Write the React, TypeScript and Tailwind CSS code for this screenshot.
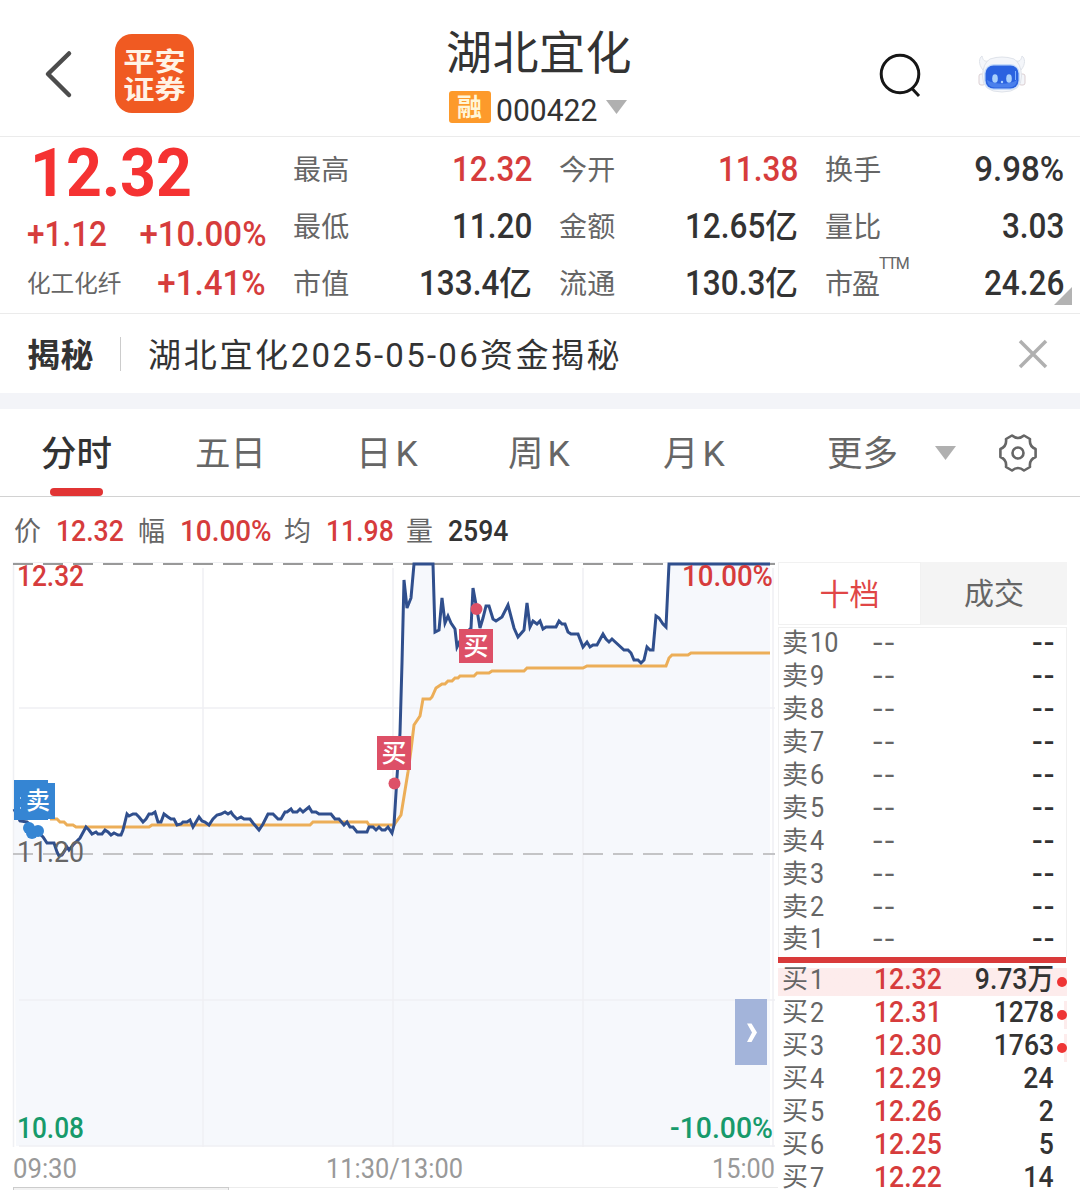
import React from "react";
import clsx from "clsx";

const STATS = [
  [
    { label: "最高", value: "12.32", up: true },
    { label: "最低", value: "11.20" },
    { label: "市值", value: "133.4", unit: "亿" },
  ],
  [
    { label: "今开", value: "11.38", up: true },
    { label: "金额", value: "12.65", unit: "亿" },
    { label: "流通", value: "130.3", unit: "亿" },
  ],
  [
    { label: "换手", value: "9.98%" },
    { label: "量比", value: "3.03" },
    { label: "市盈", value: "24.26", sup: "TTM" },
  ],
];

const TABS = [
  { label: "分时", width: "w-[154px]", active: true },
  { label: "五日", width: "w-[161px]" },
  { label: "日K", width: "w-[152px]" },
  { label: "周K", width: "w-[155px]" },
  { label: "月K", width: "w-[164px]" },
];

const INFO = [
  { label: "价", value: "12.32", width: "w-[82px]", up: true },
  { label: "幅", value: "10.00%", width: "w-[104px]", up: true },
  { label: "均", value: "11.98", width: "w-[80px]", up: true },
  { label: "量", value: "2594", width: "w-[80px]" },
];

const SELLS = [10, 9, 8, 7, 6, 5, 4, 3, 2, 1];

const BUYS = [
  { price: "12.32", qty: "9.73万", dot: true },
  { price: "12.31", qty: "1278", dot: true },
  { price: "12.30", qty: "1763", dot: true },
  { price: "12.29", qty: "24" },
  { price: "12.26", qty: "2" },
  { price: "12.25", qty: "5" },
  { price: "12.22", qty: "14" },
];

const PRICE_LINE =
  "14,809 20,821 27,822 36,830 43,837 47,843 54,843 57,852 59,856 62,855 67,847 69,850 73,845 80,838 86,827 89,830 92,834 96,832 98,834 102,834 105,830 108,832 111,835 114,833 118,835 121,835 123,830 127,814 129,816 133,814 136,814 139,817 143,822 146,819 149,814 152,814 155,812 158,822 161,822 164,814 168,817 171,819 174,819 177,825 181,824 183,822 187,822 190,820 193,827 199,817 202,821 205,822 209,825 213,819 217,815 221,814 225,812 228,814 231,812 233,815 237,819 241,817 244,819 250,819 253,823 259,830 263,824 268,814 273,814 278,819 281,819 285,812 287,812 291,809 293,812 297,812 300,809 303,812 309,807 312,812 316,812 319,814 331,814 335,819 339,819 344,825 347,822 350,827 353,827 357,832 367,832 369,827 373,827 376,830 379,827 382,830 385,830 388,827 392,833 394,825 397,777 400,733 402,663 404,580 407,608 411,598 414,564 433,564 435,632 439,630 442,598 445,623 448,616 451,623 455,629 457,647 462,637 471,628 473,588 477,610 480,628 483,618 486,606 489,606 493,619 496,621 502,617 508,605 514,628 518,637 524,630 527,603 530,627 533,621 537,624 540,621 543,629 546,627 556,627 559,621 562,624 565,624 568,632 571,634 578,634 583,647 587,642 590,647 593,645 597,645 603,634 606,639 609,642 612,639 624,650 628,650 631,653 634,660 638,660 641,663 644,660 647,647 650,650 653,650 656,616 659,618 663,624 666,627 669,564 770,564";

const AVG_LINE =
  "50,819 57,819 60,822 64,822 67,825 73,825 76,827 149,827 152,825 310,825 313,822 367,822 369,825 394,825 401,815 408,772 411,750 414,725 420,716 423,699 430,699 432,697 436,688 442,684 445,684 448,681 452,681 455,678 458,678 460,676 474,676 477,673 489,673 492,671 524,671 527,668 583,668 587,666 666,666 669,658 672,655 688,655 691,653 770,653";

// Figures are set slightly condensed, anchored to the side they align with
function Num({ children, className, right }: { children: React.ReactNode; className?: string; right?: boolean }) {
  const wide = typeof children === "string" && children.endsWith("%");
  return (
    <span className={clsx("inline-block whitespace-nowrap", wide ? "scale-x-[0.945]" : "scale-x-90", right ? "origin-right" : "origin-left", className)}>
      {children}
    </span>
  );
}

function Caret() {
  return (
    <svg width="21" height="14" viewBox="0 0 21 14">
      <path d="M0 0H21L10.5 14Z" fill="#b0b0b0" />
    </svg>
  );
}

function RobotIcon() {
  return (
    <svg width="48" height="40" viewBox="0 0 48 40">
      <g fill="#f4f6fa" stroke="#dfe3ea" strokeWidth="1">
        <path d="M5 15C0 9 1 3 4 1c1 4 2 6 7 5zM43 15c5-6 4-12 1-14-1 4-2 6-7 5z" />
        <rect x="1" y="19" width="6" height="11" rx="2" stroke="#dccfd2" />
        <rect x="41" y="19" width="6" height="11" rx="2" stroke="#dccfd2" />
        <path d="M12 4Q24 0 36 4Q43 8 43.500 21Q44 37 24 37Q4 37 4.500 21Q5 8 12 4Z" />
      </g>
      <rect x="6" y="9" width="36" height="26" rx="10" fill="#c6dcfa" />
      <rect x="7.500" y="10.500" width="33" height="23" rx="8" fill="#2a62e0" />
      <path d="M9 25c8 5 22 5 30 0v1q-1 6-8 6.500H17q-7-.5-8-6.500z" fill="#4a80ec" />
      <ellipse cx="17" cy="23.500" rx="2.800" ry="4.300" fill="#a9d0fb" />
      <ellipse cx="31" cy="23.500" rx="2.800" ry="4.300" fill="#a9d0fb" />
      <circle cx="24" cy="27" r="1.200" fill="#a9d0ff" />
      <path d="M37.500 16v9" stroke="#7fb0ff" strokeWidth="1" />
    </svg>
  );
}

function Header() {
  return (
    <header className="h-[137px] flex border-b border-[#ebebeb]">
      <div className="w-[360px] flex items-start">
        <svg className="ml-[44px] mt-[50px]" width="30" height="50" viewBox="0 0 30 50" fill="none" stroke="#4c4c4c" strokeWidth="4.500" strokeLinecap="round" strokeLinejoin="round">
          <path d="M25 3.500L4 24L25 45" />
        </svg>
        <div className="ml-[41px] mt-[34px] w-[79px] h-[79px] rounded-[17px] bg-[#f05a22] text-[#fff3e6] font-bold text-[26px] leading-[28px] pt-[14px] text-center">
          <div className="scale-x-[1.2]">平安</div>
          <div className="scale-x-[1.2]">证券</div>
        </div>
      </div>
      <div className="w-[360px] flex flex-col items-center">
        <h1 className="mt-[25px] ml-[-2px] h-[56px] leading-[56px] text-[46px] tracking-[0.500px] text-[#333]">湖北宜化</h1>
        <div className="mt-[10px] ml-[-5px] flex">
          <span className="w-[42px] h-[32px] rounded-[3px] bg-[#fd9a2b] text-[#fff6d8] text-[25px] font-bold leading-[34px] text-center">融</span>
          <span className="ml-[5px] w-[110px] leading-[38px] text-[32px] text-[#333]">
            <span className="inline-block origin-left scale-x-[0.94]">000422</span>
          </span>
          <span className="mt-[9px]"><Caret /></span>
        </div>
      </div>
      <div className="w-[360px] flex items-start">
        <svg className="ml-[159px] mt-[53px]" width="44" height="46" viewBox="0 0 44 46" fill="none" stroke="#161616" strokeWidth="3">
          <circle cx="21" cy="21" r="18.800" />
          <path d="M33 35.500L40 43" />
        </svg>
        <div className="ml-[55px] mt-[55px]"><RobotIcon /></div>
      </div>
    </header>
  );
}

function Quote() {
  return (
    <section className="h-[177px] flex border-b border-[#ebebeb] relative">
      <div className="w-[266px] pl-[27px]">
        <div className="h-[70px] ml-[3px] leading-[72px] text-[67px] font-bold text-[#f53232]">
          <span className="inline-block origin-left scale-x-[0.935]">12.32</span>
        </div>
        <div className="h-[54px] flex justify-between leading-[55px] text-[35px] font-medium text-[#d63c3c]">
          <Num>+1.12</Num>
          <Num right>+10.00%</Num>
        </div>
        <div className="h-[46px] flex justify-between items-center text-[35px] font-medium text-[#d63c3c]">
          <span className="mt-[2px] text-[23.600px] font-normal text-[#666]">化工化纤</span>
          <Num right>+1.41%</Num>
        </div>
      </div>
      {STATS.map((col, i) => (
        <div key={i} className="w-[239px] ml-[27px] flex flex-col">
          {col.map((item, j) => (
            <div key={j} className={clsx("h-[57px] flex justify-between leading-[57px]", j === 0 && "mt-[4px]")}>
              <span className={clsx("text-[28px] text-[#666] pt-[1px] flex", item.sup ? "tracking-[-1px]" : "tracking-[0.300px]")}>
                {item.label}
                {item.sup && <sup className="h-[20px] text-[16px] leading-[20px] top-[-2px] tracking-[-1.200px]">{item.sup}</sup>}
              </span>
              <span className={clsx("flex text-[35px] font-medium", item.up ? "text-[#d63c3c]" : "text-[#333]")}>
                <Num right>{item.value}</Num>
                {item.unit && <span className="text-[33px]">{item.unit}</span>}
              </span>
            </div>
          ))}
        </div>
      ))}
      <svg className="absolute right-[8px] bottom-[8px]" width="18" height="18" viewBox="0 0 18 18">
        <path d="M18 0V18H0Z" fill="#b3b3b3" />
      </svg>
    </section>
  );
}

function Notice() {
  return (
    <section className="h-[95px] flex items-center border-b-[16px] border-[#f3f4f8] text-[33px] text-[#333]">
      <span className="ml-[27px] w-[93px] font-bold tracking-[0.500px] mt-[5px]">揭秘</span>
      <span className="h-[34px] border-l border-[#ccc] w-[28px]" />
      <span className="grow flex items-center mt-[5px]">
        <span className="tracking-[2.700px]">湖北宜化</span>
        <span className="tracking-[2.250px]">2025-05-06</span>
        <span className="tracking-[2.500px]">资金揭秘</span>
      </span>
      <svg className="mr-[32px]" width="30" height="30" viewBox="0 0 30 30" stroke="#b0b0b0" strokeWidth="3.500">
        <path d="M2 2L28 28M28 2L2 28" />
      </svg>
    </section>
  );
}

function Tabs() {
  return (
    <nav className="h-[88px] flex border-b border-[#d2d2d2] pl-[41px] text-[35.500px] text-[#666]">
      {TABS.map((tab) => (
        <div key={tab.label} className={clsx("flex flex-col justify-between", tab.width)}>
          <span className={clsx("leading-[90px] h-[79px] whitespace-nowrap", tab.active && "font-medium text-[#333]")}>
            {tab.label[0]}
            <span className={clsx(tab.label[1] === "K" && "ml-[4px]")}>{tab.label[1]}</span>
          </span>
          {tab.active && <span className="ml-[9px] w-[53px] h-[8px] rounded-full bg-[#e13434]" />}
        </div>
      ))}
      <span className="leading-[90px] w-[108px]">更多</span>
      <span className="mt-[37px]"><Caret /></span>
      <svg className="ml-[42px] mt-[23px]" width="40" height="42" viewBox="-20 -21 40 42" fill="none" stroke="#666" strokeWidth="2.600" strokeLinejoin="round">
        <path d="M-6 -17.500Q0 -12.500 6 -17.500L12 -14Q11 -6.500 17.600 -4V4Q11 6.500 12 14L6 17.500Q0 12.500 -6 17.500L-12 14Q-11 6.500 -17.600 4V-4Q-11 -6.500 -12 -14Z" />
        <circle r="5.500" />
      </svg>
    </nav>
  );
}

function InfoRow() {
  return (
    <div className="h-[65px] flex items-center pl-[14px] pt-[3px]">
      {INFO.map((item) => (
        <React.Fragment key={item.label}>
          <span className="w-[42px] mt-[2px] text-[27px] text-[#666]">{item.label}</span>
          <span className={clsx("text-[29.500px] font-medium", item.width, item.up ? "text-[#d63c3c]" : "text-[#333]")}>
            <Num>{item.value}</Num>
          </span>
        </React.Fragment>
      ))}
    </div>
  );
}

function Marker({ x, y, label, fill }: { x: number; y: number; label: string; fill: string }) {
  return (
    <g>
      <rect x={x} y={y} width="34" height="34" fill={fill} />
      <text x={x + 17} y={y + 26} textAnchor="middle" fontSize="25" fontWeight="500" fill="#fff">{label}</text>
    </g>
  );
}

function Chart() {
  return (
    <svg className="shrink-0 overflow-visible" width="778" height="628" viewBox="0 562 778 628">
      <polygon points={`16,1146 ${PRICE_LINE} 770,1146`} fill="#f6f8fc" />
      {/* Grid */}
      <g stroke="#eff0f3" strokeWidth="1.500">
        <path d="M13.500 562V1147M773 568V1147" />
        <path d="M203 568V1147M393 568V1147M583 568V1147" />
        <path d="M19 708H775M19 1000H775M19 1146H775" />
        <path d="M13 562.500H775" strokeWidth="1" />
      </g>
      <path d="M13 564H775" stroke="#999" strokeWidth="2" strokeDasharray="20 10" />
      <path d="M13 854H775" stroke="#c4c4c6" strokeWidth="2" strokeDasharray="20 10" />
      <polyline points={AVG_LINE} fill="none" stroke="#ecae58" strokeWidth="3" />
      <polyline points={PRICE_LINE} fill="none" stroke="#304f8d" strokeWidth="3" />

      {/* Axis labels */}
      <g fontSize="29.500" fontWeight="500">
        <text x="17" y="586" fill="#d63c3c" textLength="67" lengthAdjust="spacingAndGlyphs">12.32</text>
        <text x="682" y="586" fill="#d63c3c" textLength="91" lengthAdjust="spacingAndGlyphs">10.00%</text>
        <text x="17" y="862" fill="#666" fontWeight="400" textLength="67" lengthAdjust="spacingAndGlyphs">11.20</text>
        <text x="17" y="1138" fill="#179a6b" textLength="67" lengthAdjust="spacingAndGlyphs">10.08</text>
        <text x="670" y="1138" fill="#179a6b" textLength="103" lengthAdjust="spacingAndGlyphs">-10.00%</text>
      </g>
      <g fontSize="27" fill="#999">
        <text x="13" y="1178" textLength="64" lengthAdjust="spacingAndGlyphs">09:30</text>
        <text x="326" y="1178" textLength="137" lengthAdjust="spacingAndGlyphs">11:30/13:00</text>
        <text x="712" y="1178" textLength="63" lengthAdjust="spacingAndGlyphs">15:00</text>
      </g>

      {/* Trade markers */}
      <circle cx="29" cy="828" r="6" fill="#3585d3" />
      <circle cx="32" cy="833" r="6" fill="#3585d3" />
      <circle cx="38" cy="831" r="6" fill="#3585d3" />
      <rect x="14" y="780" width="34" height="40" fill="#3585d3" />
      <rect x="21" y="783" width="34" height="36" fill="#3585d3" />
      <path d="M20.500 797V815" stroke="#a8cdf0" strokeWidth="1" strokeDasharray="2 8" />
      <text x="38" y="809" textAnchor="middle" fontSize="24" fontWeight="500" fill="#fff">卖</text>
      <Marker x={377} y={736} label="买" fill="#dd5067" />
      <circle cx="394.500" cy="783.500" r="6" fill="#dd5067" />
      <Marker x={459} y={629} label="买" fill="#dd5067" />
      <circle cx="476.500" cy="609" r="6" fill="#dd5067" />

      {/* Expand handle */}
      <rect x="735" y="999" width="32" height="66" fill="#a3b4da" />
      <path d="M747 1023.500H751.500L757 1032.500L751.500 1042H747L752 1032.500Z" fill="#fff" />

      <path d="M229 1187.500H778" stroke="#ececec" />
      <rect x="13.500" y="1187.500" width="215" height="6" fill="#f2f2f2" stroke="#ccc" />
    </svg>
  );
}

function OrderBook() {
  return (
    <aside className="w-[289px] h-[628px] flex flex-col">
      <div className="h-[63px] shrink-0 flex text-[30px] leading-[64px] text-center">
        <span className="w-[143px] border border-[#f1f1f1] text-[#e04646] leading-[63px]">十档</span>
        <span className="grow bg-[#f4f4f4] text-[#666]">成交</span>
      </div>
      <div className="mt-[2px] border border-b-0 border-[#f0f0f0] h-[330px] shrink-0">
        <div className="mt-[-1px]">
          {SELLS.map((n) => (
            <div key={n} className="h-[32.900px] flex items-center pl-[3px] pr-[11px] text-[#666] leading-[32px]">
              <span className="w-[91px] flex text-[28px]">
                <span className="w-[28px] text-[26px]">卖</span>
                <Num>{n}</Num>
              </span>
              <span className="grow text-[30px]">
                <span className="inline-block origin-left scale-x-[1.150] tracking-[2px]">--</span>
              </span>
              <span className="inline-block origin-right scale-x-[1.050] text-[30px] font-medium tracking-[1px] text-[#333]">--</span>
            </div>
          ))}
        </div>
      </div>
      <div className="h-[6px] w-[288px] shrink-0 bg-[#d93a3a]" />
      <div>
        {BUYS.map((row, i) => (
          <div key={i} className={clsx("h-[33px] flex items-center pl-[4px] leading-[33px]", i === 0 && "bg-linear-to-b from-transparent from-[5px] to-[#fdecec] to-[5px]")}>
            <span className="w-[92px] flex text-[28px] text-[#666]">
              <span className="w-[28px] text-[26px]">买</span>
              <Num>{i + 1}</Num>
            </span>
            <span className="w-[66px] text-[29.500px] font-medium text-[#d63c3c]">
              <Num>{row.price}</Num>
            </span>
            <span className="grow flex justify-end text-[29.500px] font-medium text-[#333]">
              <Num right>{row.qty}</Num>
            </span>
            <span className={clsx("ml-[1px] w-[12px] h-[28px] self-end flex items-center", (i === 1 || i === 2) && "border-r-[3px] border-[#fdecec]")}>
              {row.dot && <i className="w-[10px] h-[10px] rounded-full bg-[#ee3535] ml-[2px] mb-[1px] shrink-0" />}
            </span>
          </div>
        ))}
      </div>
    </aside>
  );
}

export default function App() {
  return (
    <div className="w-[1080px] h-[1190px] overflow-hidden bg-white font-['Roboto','Noto_Sans_CJK_SC',sans-serif]">
      <Header />
      <Quote />
      <Notice />
      <Tabs />
      <InfoRow />
      <div className="flex">
        <Chart />
        <OrderBook />
      </div>
    </div>
  );
}
